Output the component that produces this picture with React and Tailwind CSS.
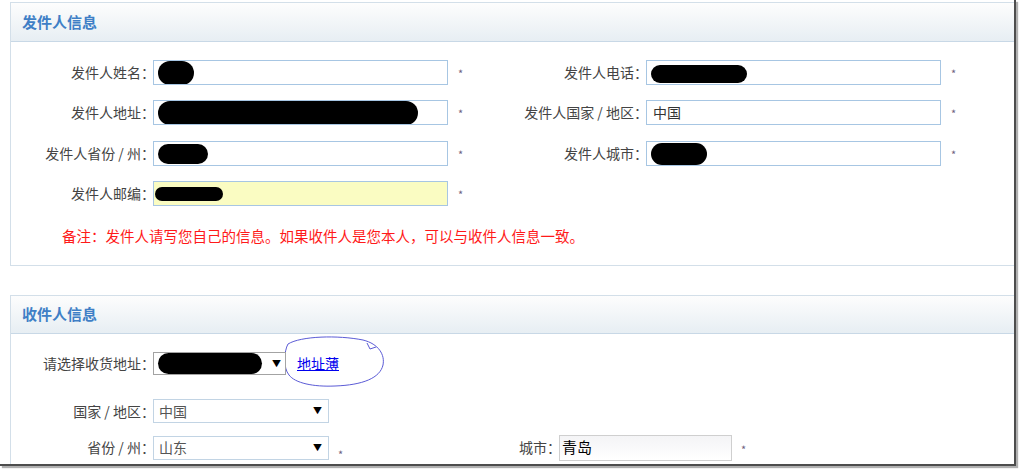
import React from 'react'

const font = { fontFamily: '"Noto Sans CJK SC", "Noto Sans", sans-serif' }

function Blob({ w, h, className = '' }) {
  return <span className={`inline-block bg-black rounded-full ${className}`} style={{ width: w, height: h }} />
}

function Star({ className = '' }) {
  return <span className={`text-[11px] text-[#6f5f80] leading-none ${className}`}>*</span>
}

// label box sticks a little under the next box so the full-width colon sits close to it
function Label({ w, children }) {
  return (
    <label className="text-right text-[14px] text-[#444] shrink-0 -mr-[2px] relative z-0" style={{ width: w + 2 }}>
      {children}
    </label>
  )
}

function Field({ label, labelW, inputW = 295, bg = 'bg-white', children, width }) {
  return (
    <div className="flex items-center" style={{ width }}>
      <Label w={labelW}>{label}</Label>
      <div
        className={`relative z-10 h-[25px] border border-[#a7c6e3] ${bg} flex items-center pl-[4px] text-[14px] text-[#333] overflow-hidden shrink-0`}
        style={{ width: inputW }}
      >
        {children}
      </div>
      <Star className="ml-[10px] mt-[2px]" />
    </div>
  )
}

function PanelHeader({ title, h }) {
  return (
    <div
      className={`${h} bg-gradient-to-b from-[#fdfdfd] to-[#e7eef3] border-b border-[#c8d8e6] flex items-center pl-[11px]`}
    >
      <span className="text-[15px] font-bold text-[#3f7fc6]">{title}</span>
    </div>
  )
}

export default function App() {
  return (
    <div className="w-[1019px] h-[469px] bg-white" style={font}>
      <div className="w-[1016px] h-[466px] border-r-2 border-b-2 border-[#4d4d4d] shadow-[2px_2px_1px_#b0b0b0] overflow-hidden pt-[2px]">
        {/* 发件人信息 */}
        <div className="ml-[10px] border-t border-l border-b border-[#d3dfe9]">
          <PanelHeader title="发件人信息" h="h-[39px]" />
          <div className="pt-[18px] pb-[19px]">
            <div className="flex items-center h-[25px]">
              <Field label="发件人姓名：" labelW={142} width={490}>
                <Blob w={36} h={24} />
              </Field>
              <Field label="发件人电话：" labelW={145}>
                <Blob w={96} h={18} className="mt-[2px]" />
              </Field>
            </div>
            <div className="flex items-center h-[25px] mt-[15px]">
              <Field label="发件人地址：" labelW={142} width={490}>
                <Blob w={260} h={24} />
              </Field>
              <Field label="发件人国家 / 地区：" labelW={145}>
                <span className="pl-[2px]">中国</span>
              </Field>
            </div>
            <div className="flex items-center h-[25px] mt-[16px]">
              <Field label="发件人省份 / 州：" labelW={142} width={490}>
                <Blob w={50} h={20} />
              </Field>
              <Field label="发件人城市：" labelW={145}>
                <Blob w={56} h={22} />
              </Field>
            </div>
            <div className="flex items-center h-[25px] mt-[15px]">
              <Field label="发件人邮编：" labelW={142} width={490} bg="bg-[#fafcc2]">
                <Blob w={68} h={14} className="-ml-[3px]" />
              </Field>
            </div>
            <p className="mt-[20px] pl-[51px] text-[14.5px] leading-[20px] text-[#ff1a1a]">
              备注：发件人请写您自己的信息。如果收件人是您本人，可以与收件人信息一致。
            </p>
          </div>
        </div>

        {/* 收件人信息 */}
        <div className="ml-[10px] mt-[29px] border-t border-l border-[#d3dfe9]">
          <PanelHeader title="收件人信息" h="h-[38px]" />
          <div className="pt-[18px] pb-[20px]">
            <div className="relative flex items-center h-[23px]">
              <Label w={142}>请选择收货地址：</Label>
              <div className="relative z-10 w-[133px] h-[23px] border border-[#a3a3a3] bg-white flex items-center justify-between pl-[4px] pr-[4px] shrink-0">
                <Blob w={104} h={21} />
                <span className="text-[9px] text-black">▼</span>
              </div>
              <a href="#" className="ml-[11px] text-[14px] text-[#0000ee] underline">地址薄</a>
              <svg className="absolute left-[272px] -top-[17px]" width="106" height="56" viewBox="0 0 106 56" fill="none">
                <path
                  d="M5 9 C18 1 55 0 80 5 C96 9 102 20 100 30 C97 43 80 50 52 51 C30 52 12 48 6 40 C0 33 1 16 5 9 Z"
                  stroke="#5b5bd6"
                  strokeWidth="1"
                />
                <path d="M84 8 L87 14 L93 12" stroke="#5b5bd6" strokeWidth="1" />
              </svg>
            </div>
            <div className="flex items-center h-[24px] mt-[24px]">
              <Label w={142}>国家 / 地区：</Label>
              <div className="relative z-10 w-[176px] h-[24px] border border-[#c2d4e4] bg-white flex items-center justify-between pl-[5px] pr-[6px] text-[14px] text-[#555]">
                <span>中国</span>
                <span className="text-[9px] text-black">▼</span>
              </div>
            </div>
            <div className="flex items-center h-[25px] mt-[12px]">
              <div className="flex items-center w-[490px]">
                <Label w={142}>省份 / 州：</Label>
                <div className="relative z-10 w-[176px] h-[24px] border border-[#c2d4e4] bg-white flex items-center justify-between pl-[5px] pr-[6px] text-[14px] text-[#555]">
                  <span>山东</span>
                  <span className="text-[9px] text-black">▼</span>
                </div>
                <Star className="ml-[9px] mt-[14px]" />
              </div>
              <Label w={58}>城市：</Label>
              <div className="relative z-10 w-[173px] h-[26px] border border-[#cfcfcf] bg-gradient-to-b from-[#f4f4f6] to-white flex items-center pl-[2px] text-[15px] text-black">
                青岛
              </div>
              <Star className="ml-[9px] mt-[4px]" />
            </div>
          </div>
        </div>
      </div>
    </div>
  )
}
